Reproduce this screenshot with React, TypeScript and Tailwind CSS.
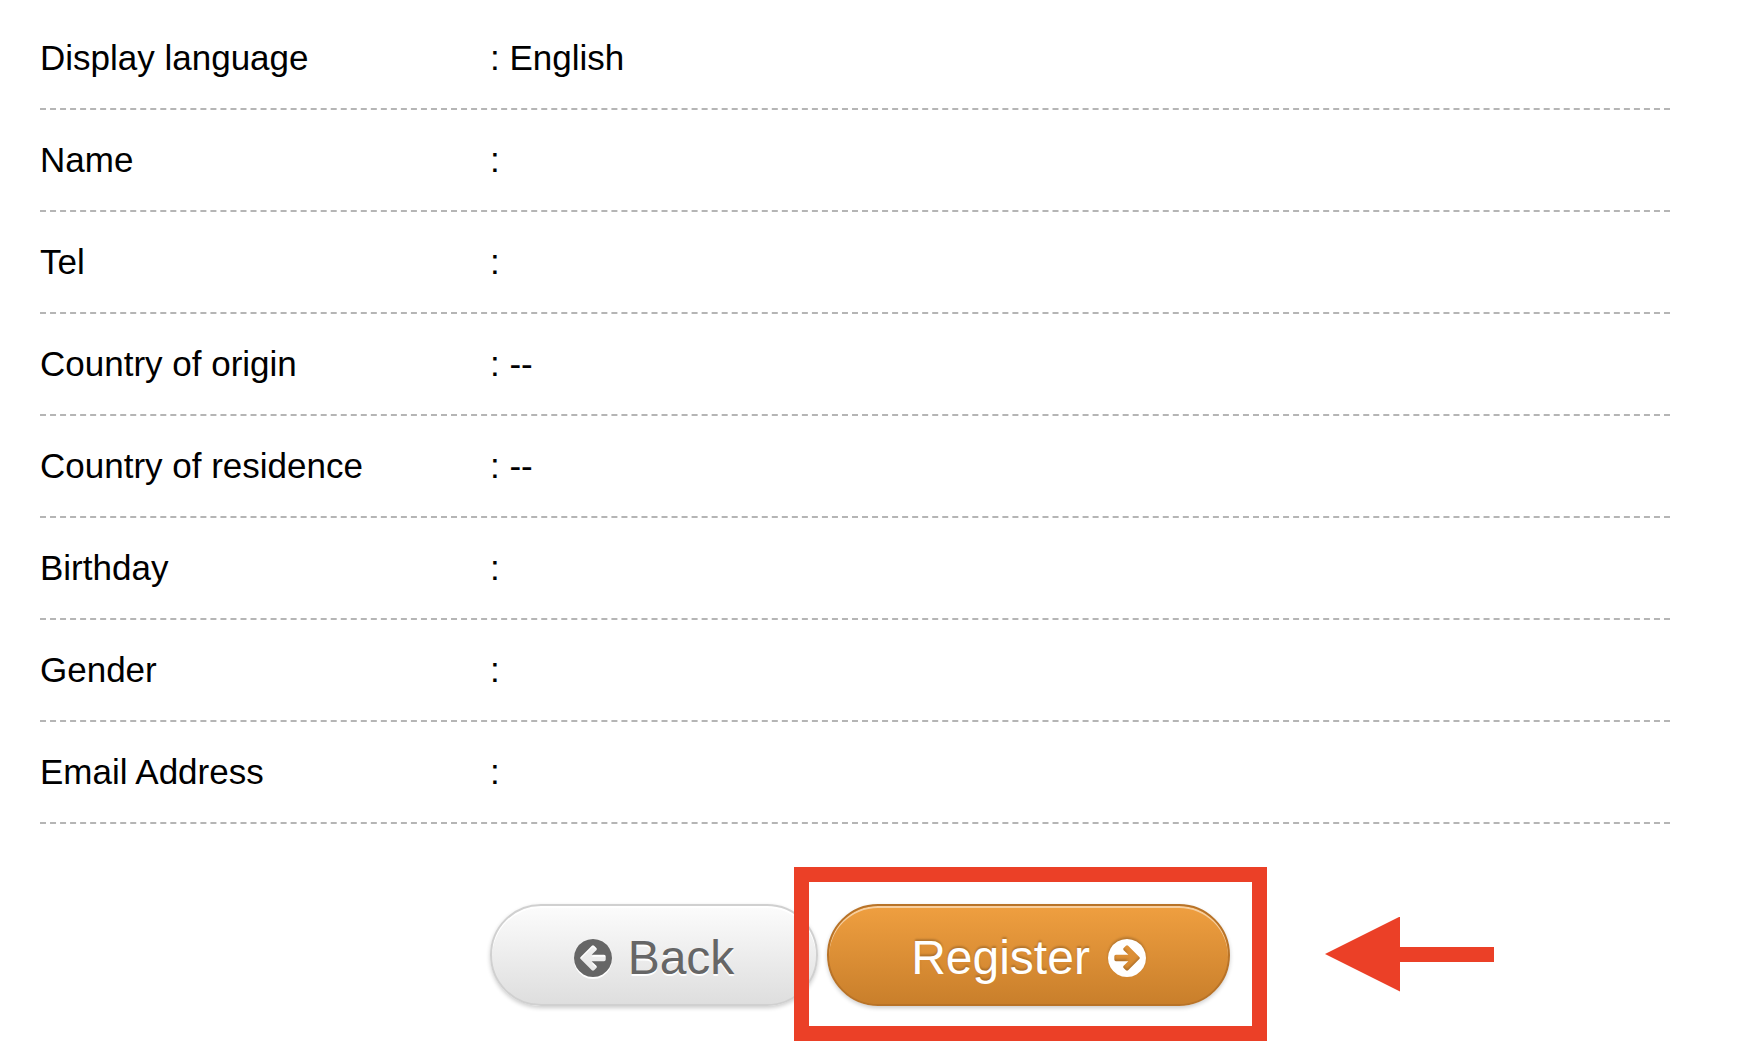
const rows = [
  { label: "Display language", value: "English" },
  { label: "Name", value: "" },
  { label: "Tel", value: "" },
  { label: "Country of origin", value: "--" },
  { label: "Country of residence", value: "--" },
  { label: "Birthday", value: "" },
  { label: "Gender", value: "" },
  { label: "Email Address", value: "" },
];

function ArrowCircle({ className = "" }: { className?: string }) {
  return (
    <svg viewBox="0 0 1536 1536" fill="currentColor" className={`size-[38px] shrink-0 ${className}`} aria-hidden="true">
      <path d="M1280 832v-128q0-26-19-45t-45-19h-502l189-189q19-19 19-45t-19-45l-91-91q-18-18-45-18t-45 18l-362 362-91 91q-18 18-18 45t18 45l91 91 362 362q18 18 45 18t45-18l91-91q18-18 18-45t-18-45l-189-189h502q26 0 45-19t19-45zM1536 768q0 209-103 385.500t-279.500 279.500-385.500 103-385.500-103-279.500-279.500-103-385.500 103-385.500 279.500-279.500 385.500-103 385.500 103 279.500 279.500 103 385.500z" />
    </svg>
  );
}

export default function App() {
  return (
    <main className="min-h-screen bg-white pl-10 pr-[94px] pt-2 pb-11 font-['Liberation_Sans',Arial,sans-serif] text-black">
      <table className="block text-left text-[35px] leading-[50px]">
        <tbody className="block">
          {rows.map((row) => (
            <tr key={row.label} className="flex border-b-2 border-dashed border-[#b5b5b5] py-[25px]">
              <th scope="row" className="w-[450px] shrink-0 font-normal">{row.label}</th>
              <td className="flex-1">: {row.value}</td>
            </tr>
          ))}
        </tbody>
      </table>

      <div className="mt-20 flex items-center pl-[450px] text-5xl">
        <button
          type="button"
          className="flex h-[102px] w-[328px] shrink-0 items-center justify-center gap-4 rounded-full border-2 border-[#d0d0d0] bg-linear-to-b from-[#fcfcfc] to-[#dedede] pt-1.5 text-[#666] shadow-[inset_0_2px_0_#fff,0_2px_4px_rgba(0,0,0,0.2)] [text-shadow:0_2px_0_#fff]"
        >
          <ArrowCircle className="drop-shadow-[0_2px_0_#fff]" />
          Back
        </button>

        <div className="relative ml-[9px] shrink-0">
          <button
            type="button"
            className="flex h-[102px] w-[403px] items-center justify-center gap-[18px] rounded-full border-2 border-[#b87328] bg-linear-to-b from-[#ef9f40] to-[#c97f2b] pt-1.5 text-white shadow-[inset_0_2px_0_rgba(255,255,255,0.5),0_2px_4px_rgba(0,0,0,0.2)] [text-shadow:0_-2px_2px_rgba(0,0,0,0.2)]"
          >
            Register
            <ArrowCircle className="rotate-180 drop-shadow-[0_2px_1px_rgba(0,0,0,0.2)]" />
          </button>
          <div className="pointer-events-none absolute -top-[37px] -right-[37px] -bottom-[35px] -left-[33px] border-[15px] border-[#eb4027]" />
        </div>

        <svg viewBox="0 0 169 76" className="ml-[95px] h-[76px] w-[169px] shrink-0 fill-[#eb4027]" aria-hidden="true">
          <path d="M0 37L75 -0.500V30H169V45H75V74.500Z" />
        </svg>
      </div>
    </main>
  );
}
